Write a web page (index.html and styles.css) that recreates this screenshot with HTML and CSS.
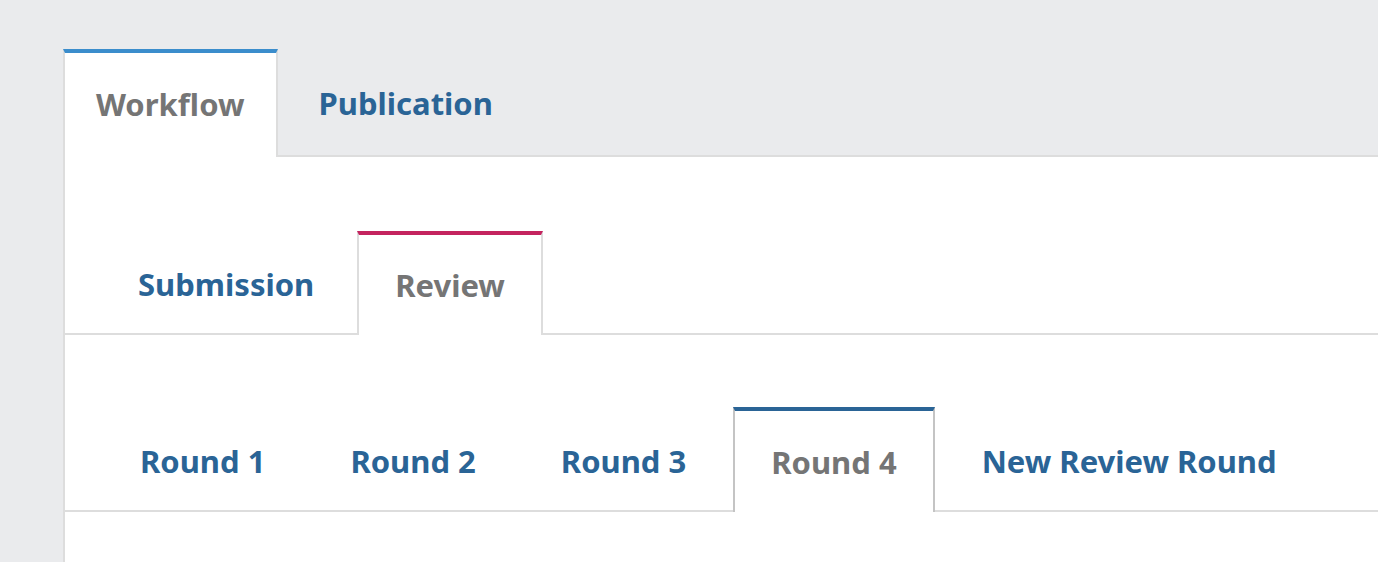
FILE: index.html
```html
<!DOCTYPE html>
<html>
<head>
<meta charset="utf-8">
<link rel="stylesheet" href="styles.css">
</head>
<body>
<div class="page">
  <div class="tabs tabs-top">
    <div class="tab tab-active tab-active-top">Workflow</div>
    <div class="tab">Publication</div>
  </div>
  <div class="panel">
    <div class="tabs tabs-sub">
      <div class="tab">Submission</div>
      <div class="tab tab-active tab-active-sub">Review</div>
    </div>
    <div class="tabs tabs-round">
      <div class="tab">Round 1</div>
      <div class="tab">Round 2</div>
      <div class="tab">Round 3</div>
      <div class="tab tab-active tab-active-round">Round 4</div>
      <div class="tab">New Review Round</div>
    </div>
  </div>
</div>
</body>
</html>
```
FILE: styles.css
```css
html, body {
  margin: 0;
  padding: 0;
  height: 100%;
}
body {
  background: #eaebed;
  font-family: "Noto Sans", sans-serif;
  overflow: hidden;
}
.page {
  box-sizing: border-box;
  height: 100%;
  display: flex;
  flex-direction: column;
  padding-top: 49px;
  margin-left: 63px;
}
.tabs {
  display: flex;
  flex-shrink: 0;
  border-bottom: 2px solid #dddddd;
}
.tab {
  box-sizing: border-box;
  height: 102px;
  display: flex;
  align-items: center;
  padding: 0 36px;
  font-size: 31px;
  font-weight: 700;
  color: #2a6496;
  border-left: 2px solid transparent;
  border-right: 2px solid transparent;
  border-top: 4px solid transparent;
  white-space: nowrap;
}
.tab-active {
  background: #ffffff;
  color: #757575;
  border-left-color: #dddddd;
  border-right-color: #dddddd;
  margin-bottom: -2px;
  height: 104px;
}
.tabs-top {
  gap: 8px;
}
.tabs-top .tab {
  height: 106px;
  padding: 0 31px 3px;
}
.tabs-top .tab-active {
  height: 108px;
}
.tab-active-top {
  border-top-color: #3b8dcc;
}
.panel {
  flex: 1;
  min-height: 0;
  background: #ffffff;
  border-left: 2px solid #dddddd;
  padding-top: 74px;
}
.tabs-sub {
  padding-left: 35px;
  gap: 5px;
}
.tab-active-sub {
  border-top-color: #c4245f;
}
.tabs-round {
  padding-left: 37px;
  margin-top: 72px;
  gap: 9px;
}
.tabs-round .tab {
  height: 103px;
}
.tabs-round .tab-active {
  height: 105px;
}
.tab-active-round {
  border-top-color: #2a6496;
  border-left-color: #c4c4c4;
  border-right-color: #c4c4c4;
}
```
